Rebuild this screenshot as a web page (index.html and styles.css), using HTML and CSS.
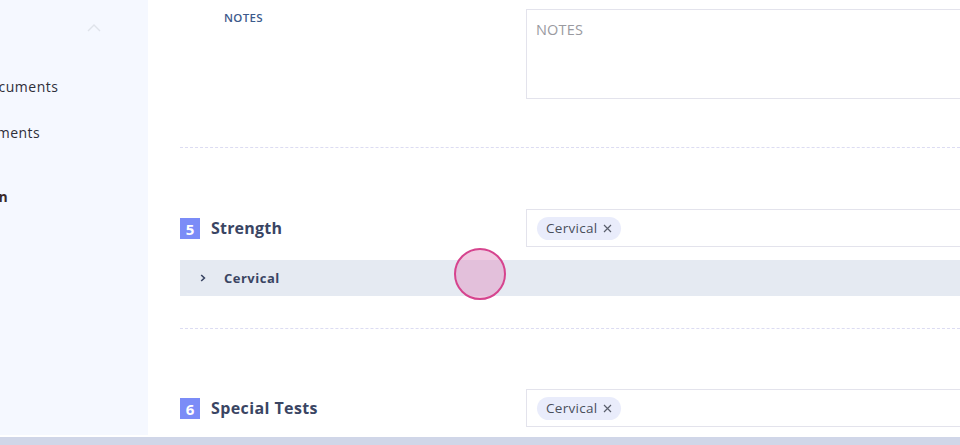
FILE: index.html
```html
<!DOCTYPE html>
<html>
<head>
<meta charset="utf-8">
<link rel="stylesheet" href="styles.css">
</head>
<body>
<div class="app">
  <aside class="sidebar">
    <div class="side-head">
      <svg class="side-chevron" width="14" height="8" viewBox="0 0 14 8"><path d="M1 7 L7 1 L13 7" fill="none" stroke="#dfe3ea" stroke-width="1.4"/></svg>
    </div>
    <nav class="nav">
      <div class="nav-item i1">Documents</div>
      <div class="nav-item i2">Payments</div>
      <div class="nav-item i3 strong">Admin</div>
    </nav>
  </aside>
  <main class="main">
    <div class="form-row notes-row">
      <div class="label-col"><span class="field-label">NOTES</span></div>
      <div class="field-col"><div class="textarea">NOTES</div></div>
    </div>
    <div class="sep"></div>
    <div class="form-row section-row s5">
      <div class="label-col"><span class="badge">5</span><span class="section-title">Strength</span></div>
      <div class="field-col"><div class="select"><span class="chip">Cervical<svg class="chip-x" width="9" height="9" viewBox="0 0 9 9"><path d="M1 1 L8 8 M8 1 L1 8" stroke="#5a5f6c" stroke-width="1.2"/></svg></span></div></div>
    </div>
    <div class="collapse">
      <svg class="caret" width="6" height="8" viewBox="0 0 6 8"><path d="M1.2 1 L4.4 4 L1.2 7" fill="none" stroke="#3a4563" stroke-width="1.6"/></svg>
      <span class="collapse-title">Cervical</span>
      <span class="touch"></span>
    </div>
    <div class="sep sep2"></div>
    <div class="form-row section-row s6">
      <div class="label-col"><span class="badge">6</span><span class="section-title">Special Tests</span></div>
      <div class="field-col"><div class="select"><span class="chip">Cervical<svg class="chip-x" width="9" height="9" viewBox="0 0 9 9"><path d="M1 1 L8 8 M8 1 L1 8" stroke="#5a5f6c" stroke-width="1.2"/></svg></span></div></div>
    </div>
  </main>
</div>
<div class="bottom-bar"></div>
</body>
</html>
```
FILE: styles.css
```css
html, body { margin: 0; padding: 0; }
body {
  width: 960px;
  height: 445px;
  overflow: hidden;
  background: #ffffff;
  font-family: "Open Sans", "Liberation Sans", sans-serif;
  color: #3a4563;
}
.app {
  display: flex;
  height: 437px;
  overflow: hidden;
}
.sidebar {
  width: 148px;
  flex: none;
  background: #f5f8ff;
  height: 435px;
  overflow: hidden;
}
.side-head {
  height: 56px;
  display: flex;
  justify-content: flex-end;
  padding-right: 47px;
  padding-top: 24px;
  box-sizing: border-box;
}
.side-chevron { display: block; }
.nav { display: flex; flex-direction: column; }
.nav-item {
  font-size: 14px;
  color: #2f2f3a;
  white-space: nowrap;
  height: 20px;
  line-height: 20px;
  letter-spacing: 0.5px;
}
.nav-item.i1 { margin-left: -21px; margin-top: 21px; }
.nav-item.i2 { margin-left: -28px; margin-top: 26px; }
.nav-item.i3 { margin-left: -40px; margin-top: 44px; }
.nav-item.strong { font-weight: 700; color: #3b2a2a; }

.main {
  flex: 1;
  padding: 9px 0 0 32px;
  min-width: 0;
}
.form-row {
  display: flex;
  align-items: center;
}
.label-col {
  width: 346px;
  flex: none;
  display: flex;
  align-items: center;
}
.field-col { flex: 1; min-width: 0; }
.notes-row { align-items: flex-start; height: 90px; }
.notes-row .label-col { padding-left: 44px; padding-top: 1px; box-sizing: border-box; }
.field-label {
  font-size: 11.5px;
  font-weight: 600;
  color: #3d5a8c;
  letter-spacing: 0.3px;
}
.textarea {
  height: 90px;
  box-sizing: border-box;
  border: 1px solid #e3e3ec;
  border-right: none;
  padding: 10px 9px;
  font-size: 14.5px;
  color: #9a9aa0;
  letter-spacing: 0.2px;
}
.sep {
  margin-top: 48px;
  border-top: 1px dashed #dcdcf2;
}
.sep2 { margin-top: 32px; }
.section-row { margin-top: 61px; height: 38px; }
.s6 { margin-top: 60px; }
.badge {
  width: 20px;
  height: 21px;
  background: #7b8cf7;
  color: #ffffff;
  font-weight: 700;
  font-size: 15px;
  display: flex;
  align-items: center;
  justify-content: center;
  margin-top: 1px;
}
.section-title {
  margin-left: 11px;
  font-size: 16px;
  font-weight: 700;
  color: #3a4563;
  letter-spacing: 0.2px;
}
.s6 .section-title { letter-spacing: 0.4px; }
.select {
  height: 38px;
  box-sizing: border-box;
  border: 1px solid #e3e3ec;
  border-right: none;
  display: flex;
  align-items: center;
  padding-left: 10px;
}
.chip {
  height: 23px;
  border-radius: 12px;
  background: #e9ecfb;
  display: inline-flex;
  align-items: center;
  padding: 0 9px 0 9px;
  font-size: 13.5px;
  letter-spacing: 0.3px;
  color: #4a4f5c;
}
.chip-x { display: block; margin-left: 5px; }
.collapse {
  position: relative;
  margin-top: 13px;
  height: 36px;
  background: #e5eaf2;
  display: flex;
  align-items: center;
  padding-left: 20px;
}
.caret { display: block; }
.collapse-title {
  margin-left: 18px;
  font-size: 13px;
  font-weight: 700;
  color: #3a4563;
  letter-spacing: 0.5px;
}
.touch {
  position: absolute;
  left: 274px;
  top: -12px;
  width: 48px;
  height: 48px;
  border-radius: 50%;
  border: 2px solid #d6448e;
  background: rgba(226, 150, 196, 0.5);
}
.bottom-bar {
  height: 8px;
  background: #d0d6e8;
}
```
